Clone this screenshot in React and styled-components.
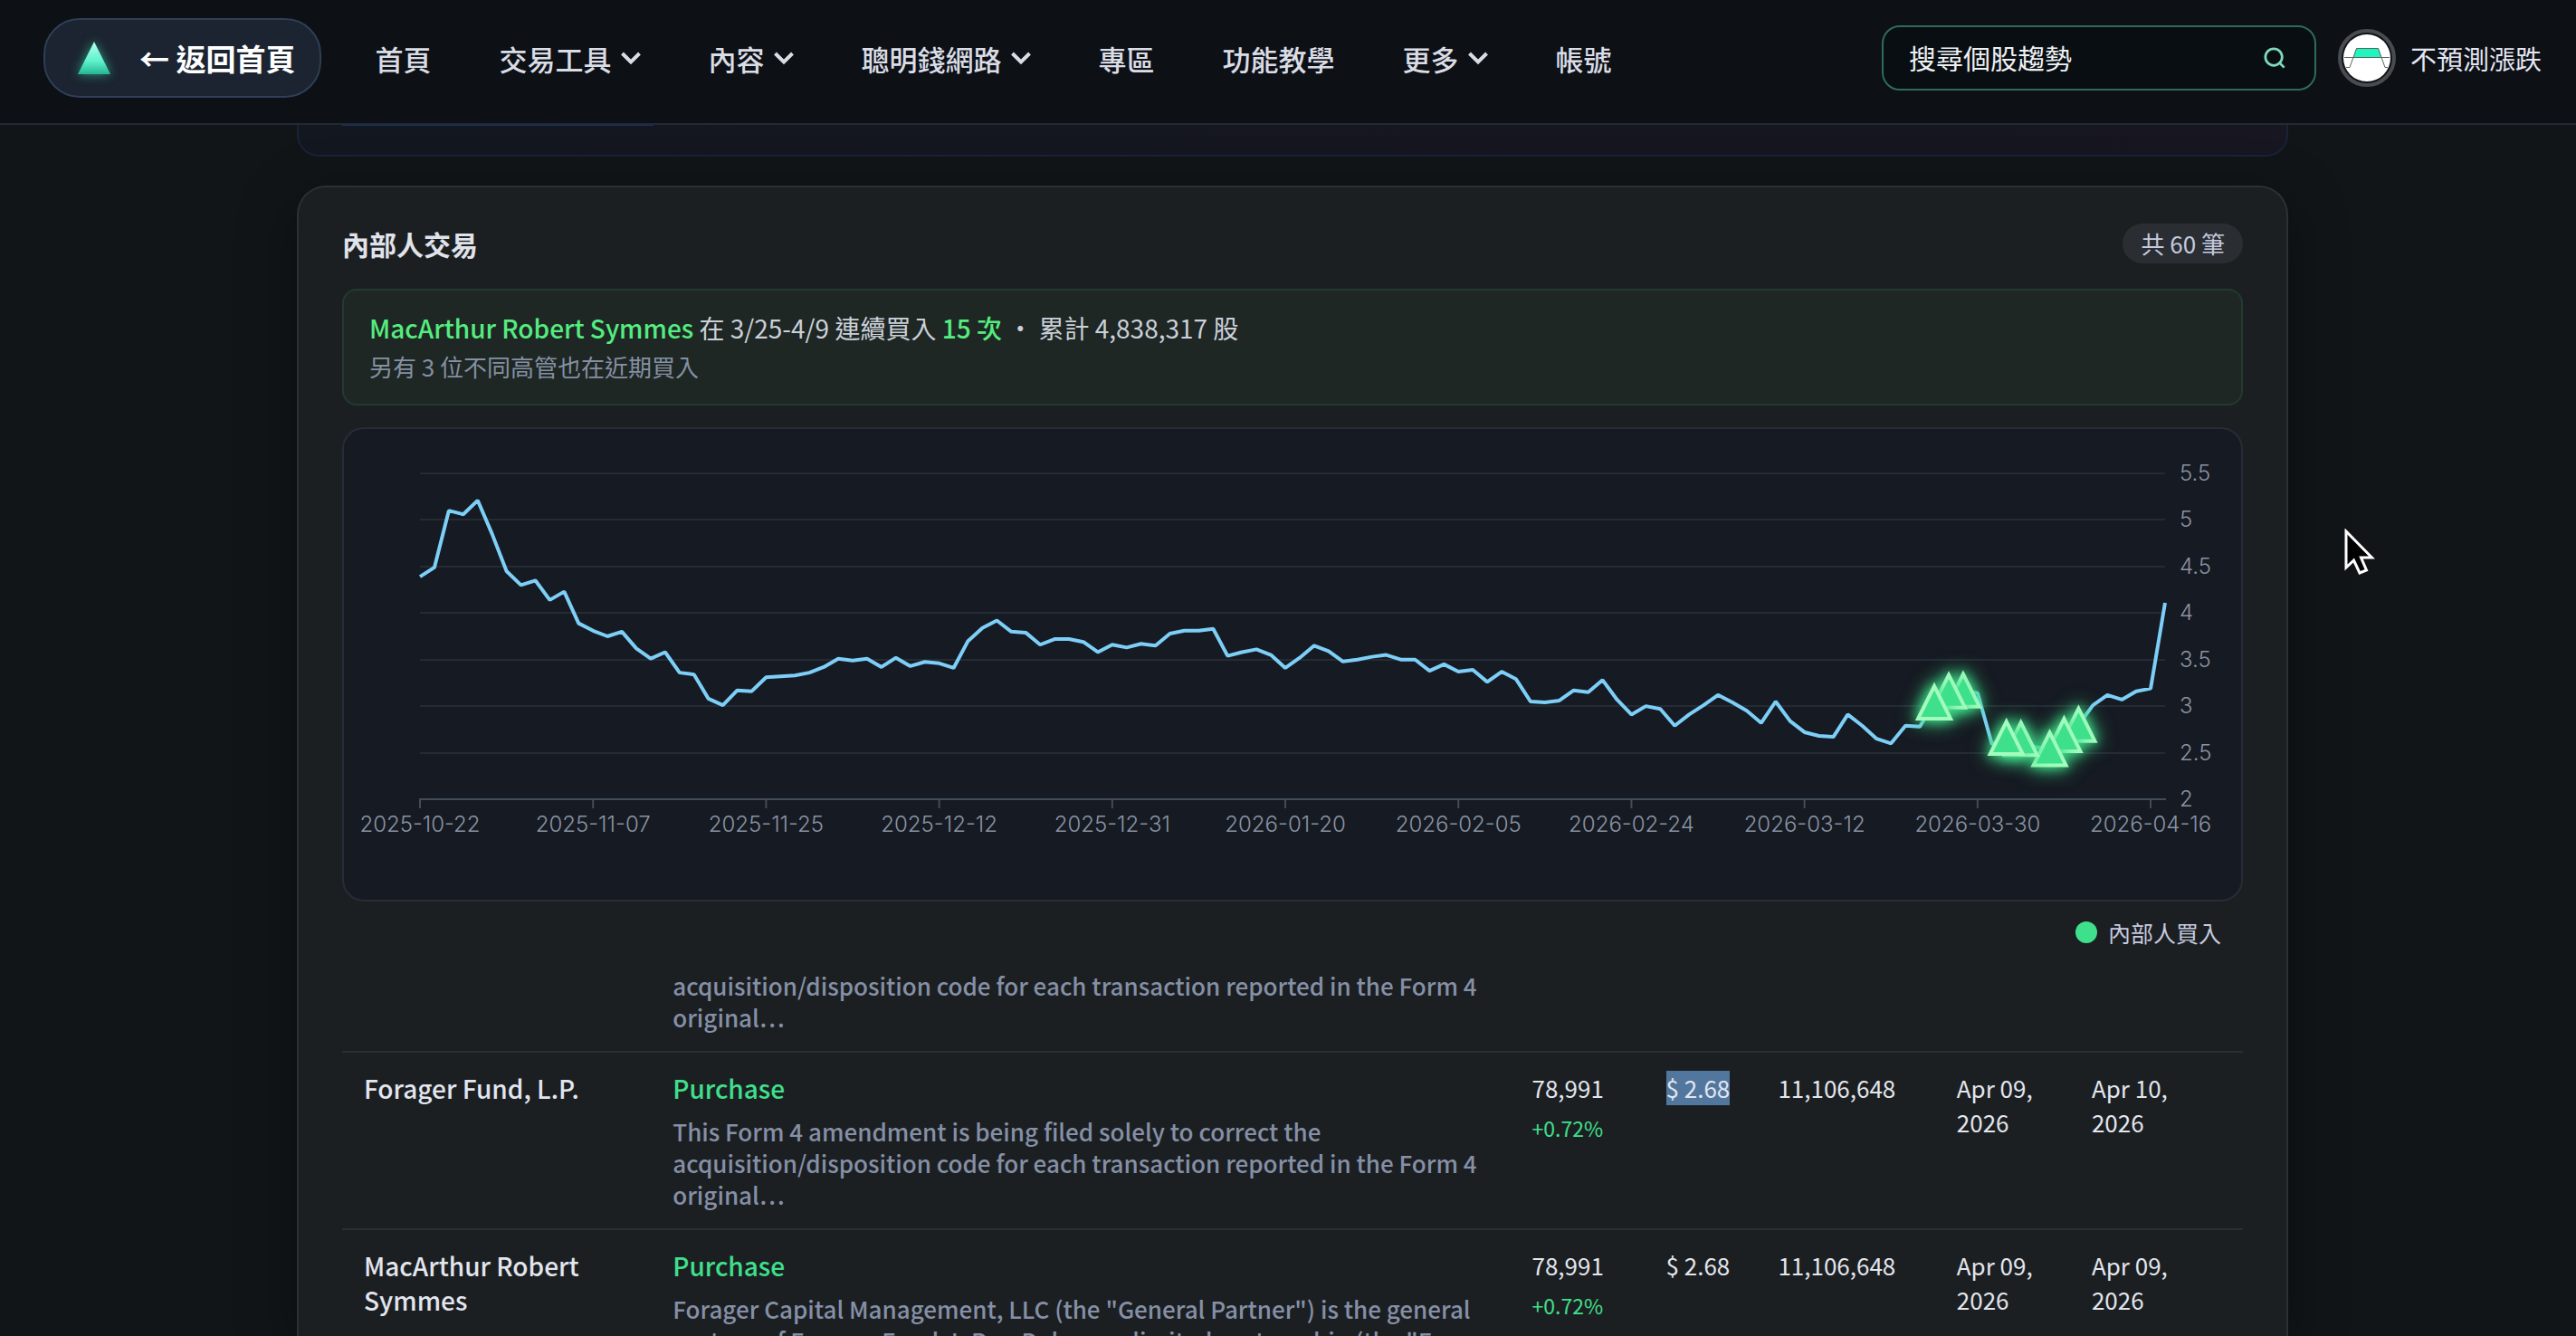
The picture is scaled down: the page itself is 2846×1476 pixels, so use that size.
import React from 'react';
import styled, { createGlobalStyle } from 'styled-components';

const NAV_ITEMS = [
  { label: '首頁' },
  { label: '交易工具', menu: true },
  { label: '內容', menu: true },
  { label: '聰明錢網路', menu: true },
  { label: '專區' },
  { label: '功能教學' },
  { label: '更多', menu: true },
  { label: '帳號' },
];

const PRICES = [
  4.39, 4.49, 5.1, 5.06, 5.21, 4.85, 4.45, 4.3, 4.35, 4.14, 4.23, 3.89, 3.81, 3.75, 3.8, 3.62, 3.51, 3.58,
  3.36, 3.34, 3.08, 3.01, 3.17, 3.16, 3.31, 3.32, 3.33, 3.36, 3.42, 3.51, 3.49, 3.51, 3.42, 3.52, 3.43, 3.475,
  3.46, 3.41, 3.7, 3.84, 3.92, 3.8, 3.79, 3.66, 3.72, 3.72, 3.69, 3.58, 3.66, 3.63, 3.67, 3.65, 3.78, 3.81,
  3.81, 3.83, 3.54, 3.58, 3.61, 3.55, 3.41, 3.52, 3.65, 3.59, 3.48, 3.5, 3.53, 3.55, 3.5, 3.5, 3.38, 3.45,
  3.37, 3.39, 3.26, 3.37, 3.29, 3.05, 3.04, 3.06, 3.17, 3.15, 3.28, 3.07, 2.91, 3.0, 2.97, 2.79, 2.91, 3.01,
  3.12, 3.04, 2.95, 2.82, 3.05, 2.84, 2.72, 2.68, 2.67, 2.91, 2.79, 2.65, 2.6, 2.79, 2.78, 3.04, 3.16, 3.17,
  3.14, 2.59, 2.66, 2.65, 2.56, 2.54, 2.69, 2.8, 3.01, 3.12, 3.07, 3.16, 3.19, 4.11,
];

const DATES = [
  '2025-10-22', '2025-11-07', '2025-11-25', '2025-12-12', '2025-12-31', '2026-01-20',
  '2026-02-05', '2026-02-24', '2026-03-12', '2026-03-30', '2026-04-16',
];

const LEVELS = [5.5, 5, 4.5, 4, 3.5, 3, 2.5, 2];

// Days with insider purchases, latest first so the earliest marker ends on top
const BUY_DAYS = [115, 114, 113, 111, 110, 107, 106, 105];

const TRADES = [
  {
    id: 1,
    name: 'Forager Fund, L.P.',
    note: 'This Form 4 amendment is being filed solely to correct the acquisition/disposition code for each transaction reported in the Form 4 original⋯',
    shares: '78,991',
    change: '+0.72%',
    price: '$ 2.68',
    held: '11,106,648',
    traded: 'Apr 09, 2026',
    filed: 'Apr 10, 2026',
    selected: true,
  },
  {
    id: 2,
    name: 'MacArthur Robert Symmes',
    note: 'Forager Capital Management, LLC (the "General Partner") is the general partner of Forager Fund, L.P., a Delaware limited partnership (the "F⋯',
    shares: '78,991',
    change: '+0.72%',
    price: '$ 2.68',
    held: '11,106,648',
    traded: 'Apr 09, 2026',
    filed: 'Apr 09, 2026',
  },
];

const PLOT = { left: 84, right: 2012, top: 49, bottom: 409 };
const STEP = (PLOT.right - PLOT.left) / (PRICES.length - 1);
const xAt = (i) => PLOT.left + i * STEP;
const yAt = (v) => PLOT.bottom - ((v - 2) / 3.5) * (PLOT.bottom - PLOT.top);

const Chevron = () => (
  <ChevronSvg viewBox="1 0 22 16" aria-hidden="true">
    <path d="M2.5 3 L12 12.5 L21.5 3" fill="none" stroke="currentColor" strokeWidth="4" />
  </ChevronSvg>
);

const PriceChart = () => (
  <ChartSvg viewBox="0 0 2096 520" role="img" aria-label="內部人交易走勢圖">
    {LEVELS.slice(0, -1).map((v) => (
      <line key={v} x1={PLOT.left} x2={PLOT.right} y1={Math.round(yAt(v))} y2={Math.round(yAt(v))} stroke="#252b34" strokeWidth="2" />
    ))}
    <line x1={PLOT.left - 1} x2={PLOT.right + 1} y1={PLOT.bottom} y2={PLOT.bottom} stroke="#434c5a" strokeWidth="2" />
    {DATES.map((date, i) => (
      <g key={date}>
        <line x1={xAt(i * 12)} x2={xAt(i * 12)} y1={PLOT.bottom} y2={PLOT.bottom + 10} stroke="#434c5a" strokeWidth="2" />
        <AxisText x={xAt(i * 12)} y={PLOT.bottom + 36} textAnchor="middle">{date}</AxisText>
      </g>
    ))}
    {LEVELS.map((v) => (
      <AxisText key={v} x={PLOT.right + 16} y={yAt(v) + 8}>{v}</AxisText>
    ))}
    <polyline
      points={PRICES.map((v, i) => `${xAt(i)},${yAt(v)}`).join(' ')}
      fill="none"
      stroke="#7dcff8"
      strokeWidth="4"
      strokeLinejoin="bevel"
    />
    {BUY_DAYS.map((day) => (
      <BuyMarker key={day} transform={`translate(${xAt(day)} ${yAt(PRICES[day])})`}>
        <path d="M0 -18 L18 18 L-18 18 Z" />
      </BuyMarker>
    ))}
  </ChartSvg>
);

const App = () => (
  <Page>
    <GlobalStyle />
    <Header>
      <BackLink href="#home">
        <LogoSvg viewBox="0 0 36 36" aria-hidden="true">
          <defs>
            <linearGradient id="peak" x1="0" y1="0" x2="0" y2="1">
              <stop offset="0" stopColor="#b4ffe9" />
              <stop offset="0.6" stopColor="#5ef2cb" />
              <stop offset="1" stopColor="#25b592" />
            </linearGradient>
          </defs>
          <path d="M18 0 L36 36 L0 36 Z" fill="url(#peak)" />
        </LogoSvg>
        <span>← 返回首頁</span>
      </BackLink>
      <Nav>
        {NAV_ITEMS.map(({ label, menu }) =>
          menu ? (
            <NavButton key={label} type="button">
              {label}
              <Chevron />
            </NavButton>
          ) : (
            <NavLink key={label} href={`#${label}`}>{label}</NavLink>
          )
        )}
      </Nav>
      <SearchBox>
        <SearchInput type="text" placeholder="搜尋個股趨勢" aria-label="搜尋個股趨勢" />
        <SearchButton type="button" aria-label="搜尋">
          <svg width="24" height="24" viewBox="0 0 26 26" fill="none" stroke="#7fd9bb" strokeWidth="3" aria-hidden="true">
            <circle cx="12" cy="12" r="10" />
            <path d="M18.5 18.5 L24.5 24.5" />
          </svg>
        </SearchButton>
      </SearchBox>
      <Account type="button">
        <Avatar viewBox="0 0 64 64" aria-hidden="true">
          <circle cx="32" cy="32" r="30" fill="#101318" stroke="#484c50" strokeWidth="4" />
          <circle cx="32" cy="32" r="26" fill="#fff" />
          <path d="M20.5 21 H44.5 L48 31 H17 Z" fill="#1ff5bd" />
          <path d="M7 31.5 H57 M9 42.5 H13 L20.5 21.5 H44.5 L52 42.5 H55" fill="none" stroke="#5b6560" />
        </Avatar>
        不預測漲跌
      </Account>
    </Header>

    <Main>
      <PreviousPanel>
        <PanelEdge />
      </PreviousPanel>

      <Card>
        <CardHeader>
          <Title>內部人交易</Title>
          <CountBadge>共 60 筆</CountBadge>
        </CardHeader>

        <Banner>
          <BannerLine>
            <Strong>MacArthur Robert Symmes</Strong> 在 3/25-4/9 連續買入 <Strong>15 次</Strong> ・ 累計 4,838,317 股
          </BannerLine>
          <BannerNote>另有 3 位不同高管也在近期買入</BannerNote>
        </Banner>

        <ChartPanel>
          <PriceChart />
        </ChartPanel>
        <Legend>
          <LegendDot />
          內部人買入
        </Legend>

        <TableScroll>
          <Table>
            <colgroup>
              <Col $share={16.25} />
              <Col $share={45.2} />
              <Col $share={7.05} />
              <Col $share={5.9} />
              <Col $share={9.4} />
              <Col $share={7.1} />
              <Col $share={9.1} />
            </colgroup>
            <tbody>
              <Row>
                <TailCell />
                <TailCell>
                  <Note>acquisition/disposition code for each transaction reported in the Form 4 original⋯</Note>
                </TailCell>
                <TailCell colSpan={5} />
              </Row>
              {TRADES.map((t) => (
                <Row key={t.id}>
                  <NameCell scope="row">{t.name}</NameCell>
                  <Cell>
                    <Kind>Purchase</Kind>
                    <Note $spaced>{t.note}</Note>
                  </Cell>
                  <Cell>
                    {t.shares}
                    <Change>{t.change}</Change>
                  </Cell>
                  <PriceCell>{t.selected ? <Selected>{t.price}</Selected> : t.price}</PriceCell>
                  <Cell>{t.held}</Cell>
                  <Cell>{t.traded}</Cell>
                  <Cell>{t.filed}</Cell>
                </Row>
              ))}
            </tbody>
          </Table>
        </TableScroll>
      </Card>
    </Main>

    <Pointer viewBox="0 0 34 52" aria-hidden="true">
      <path d="M2 3 V43 L10.5 35 L17 49 L24.5 46 L18.5 32 H30.5 Z" fill="#000" stroke="#fff" strokeWidth="3" />
    </Pointer>
  </Page>
);

// Styled Components
const GlobalStyle = createGlobalStyle`
  *, *::before, *::after {
    box-sizing: border-box;
  }
  body {
    margin: 0;
    background: #111517;
    color: #e2e6ee;
    font-family: "Noto Sans CJK TC", "Noto Sans", sans-serif;
    font-size: 26px;
  }
  button, input {
    font: inherit;
    color: inherit;
    background: none;
    border: 0;
    padding: 0;
  }
`;

const Page = styled.div`
  position: relative;
  display: flex;
  flex-direction: column;
  height: 100vh;
  overflow: hidden;
`;

const Header = styled.header`
  flex: none;
  display: flex;
  align-items: center;
  padding: 20px 38px 28px 48px;
  background: #0d1015;
  border-bottom: 2px solid #212a36;
`;

const BackLink = styled.a`
  display: flex;
  align-items: center;
  gap: 32px;
  height: 88px;
  padding: 0 26px 0 36px;
  border: 2px solid #2e3f57;
  border-radius: 40px;
  background: #1b2430;
  color: #fff;
  font-size: 33px;
  font-weight: 700;
  text-decoration: none;
  white-space: nowrap;
`;

const LogoSvg = styled.svg`
  width: 36px;
  height: 36px;
  overflow: visible;
  filter: drop-shadow(0 0 6px rgba(60, 230, 185, 0.6));
`;

const Nav = styled.nav`
  display: flex;
  align-items: center;
  gap: 75px;
  margin-left: 60px;
  color: #dadde6;
  font-size: 31px;
  font-weight: 500;
  white-space: nowrap;
`;

const NavLink = styled.a`
  color: inherit;
  text-decoration: none;
`;

const NavButton = styled.button`
  display: flex;
  align-items: center;
  gap: 10px;
`;

const ChevronSvg = styled.svg`
  width: 22px;
  height: 16px;
`;

const SearchBox = styled.div`
  display: flex;
  align-items: center;
  width: 480px;
  height: 72px;
  margin-left: auto;
  padding: 0 32px 0 28px;
  border: 2px solid #2f6b5c;
  border-radius: 20px;
  background: #080e11;
`;

const SearchInput = styled.input`
  flex: 1;
  min-width: 0;
  padding-bottom: 3px;
  font-size: 30px;
  outline: none;

  &::placeholder {
    color: #eef1f4;
    opacity: 1;
  }
`;

const SearchButton = styled.button`
  display: flex;
`;

const Account = styled.button`
  display: flex;
  align-items: center;
  gap: 16px;
  margin-left: 24px;
  color: #e4e5f2;
  font-size: 29px;
  white-space: nowrap;
`;

const Avatar = styled.svg`
  width: 64px;
  height: 64px;
`;

const Main = styled.main`
  flex: 1;
  min-height: 0;
  display: flex;
  flex-direction: column;
  gap: 32px;
  width: 100%;
  max-width: 2210px;
  margin: 0 auto;
  padding-left: 10px;
`;

const PreviousPanel = styled.section`
  flex: none;
  height: 35px;
  padding: 0 48px;
  border: 2px solid #1a2238;
  border-top: 0;
  border-radius: 0 0 24px 24px;
  background: linear-gradient(90deg, #131720, #171621);
`;

const PanelEdge = styled.div`
  width: 344px;
  height: 1px;
  background: #1a3560;
`;

const Card = styled.section`
  flex: 1;
  min-height: 0;
  display: flex;
  flex-direction: column;
  padding: 40px 48px 0;
  border: 2px solid #2c3035;
  border-bottom: 0;
  border-radius: 32px 32px 0 0;
  background: #1c1f22;
  box-shadow: 0 16px 64px rgba(0, 0, 0, 0.35);
`;

const CardHeader = styled.div`
  display: flex;
  align-items: center;
  justify-content: space-between;
  margin-bottom: 28px;
`;

const Title = styled.h2`
  margin: 0;
  font-size: 30px;
  line-height: 44px;
  font-weight: 700;
  color: #e0e3ea;
`;

const CountBadge = styled.span`
  padding: 0 20px;
  border-radius: 22px;
  background: #2a2e33;
  color: #c5cadf;
  font-size: 26px;
  line-height: 44px;
`;

const Banner = styled.div`
  padding: 19px 28px 21px;
  margin-bottom: 24px;
  border: 2px solid #233a2e;
  border-radius: 16px;
  background: #1e2724;
`;

const BannerLine = styled.p`
  margin: 0;
  font-size: 28px;
  line-height: 44px;
  color: #cbd0d9;
`;

const BannerNote = styled.p`
  margin: 0;
  font-size: 26px;
  line-height: 41px;
  color: #8590a2;
`;

const Strong = styled.strong`
  color: #55ec80;
  font-weight: 500;
`;

const ChartPanel = styled.div`
  border: 2px solid #282c37;
  border-radius: 24px;
  background: #161a22;
`;

const ChartSvg = styled.svg`
  display: block;
  width: 100%;
`;

const AxisText = styled.text`
  fill: #8a93a3;
  font-family: Inter, "Liberation Sans", sans-serif;
  font-size: 24px;
  font-weight: 300;
`;

const BuyMarker = styled.g`
  fill: #3fe08c;
  stroke: #a3fcbd;
  stroke-width: 4px;
  filter: drop-shadow(0 0 6px rgba(63, 224, 140, 0.7)) drop-shadow(0 0 10px #3fe08c);
`;

const Legend = styled.div`
  display: flex;
  align-items: center;
  justify-content: flex-end;
  gap: 12px;
  padding: 15px 24px 0;
  color: #c5cadf;
  font-size: 25px;
  line-height: 38px;
`;

const LegendDot = styled.span`
  width: 24px;
  height: 24px;
  border-radius: 50%;
  background: #3fe08c;
`;

const TableScroll = styled.div`
  flex: 1;
  min-height: 0;
  margin-top: 22px;
  overflow-y: auto;
  scrollbar-width: none;
`;

const Table = styled.table`
  width: 100%;
  table-layout: fixed;
  border-collapse: collapse;
`;

const Col = styled.col`
  width: ${({ $share }) => $share}%;
`;

const Row = styled.tr`
  border-bottom: 2px solid #2b2f34;
`;

const Cell = styled.td`
  padding: 20px 24px;
  line-height: 38px;
  vertical-align: top;
`;

const TailCell = styled(Cell)`
  padding-top: 0;
`;

const PriceCell = styled(Cell)`
  white-space: nowrap;
`;

const NameCell = styled.th`
  padding: 20px 24px;
  font-weight: 500;
  font-size: 28px;
  line-height: 38px;
  text-align: left;
  vertical-align: top;
`;

const Kind = styled.div`
  color: #3fe08c;
  font-size: 28px;
  font-weight: 500;
`;

const Note = styled.p`
  margin: ${({ $spaced }) => ($spaced ? '11px' : 0)} 0 0;
  color: #8590a6;
  font-size: 26px;
  font-weight: 500;
  line-height: 35px;
`;

const Change = styled.div`
  margin-top: 8px;
  color: #3fe08c;
  font-size: 23px;
  line-height: 35px;
`;

const Selected = styled.mark`
  display: inline-block;
  background: #52779f;
  color: #e2e6ee;
`;

const Pointer = styled.svg`
  position: absolute;
  top: 584px;
  left: 91%;
  width: 34px;
  height: 52px;
`;

export default App;
